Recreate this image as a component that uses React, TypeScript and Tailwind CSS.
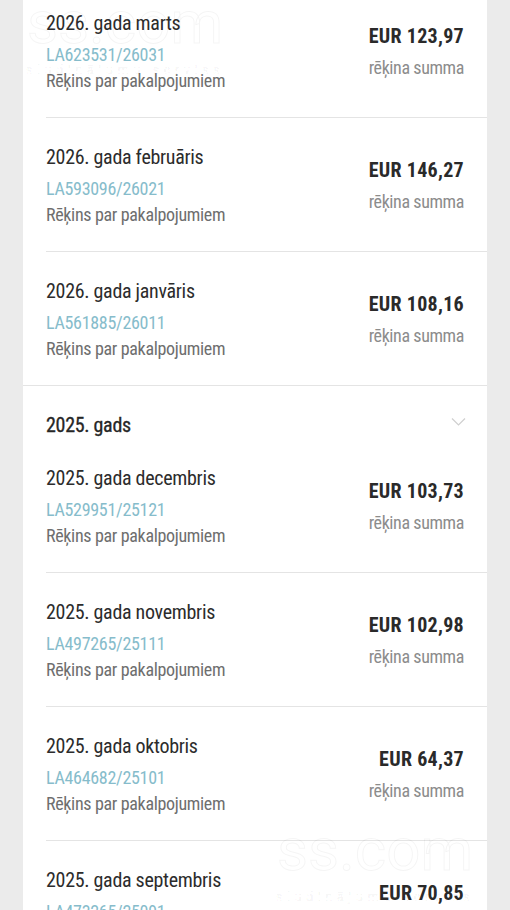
type Invoice = {
  title: string;
  number: string;
  amount: string;
};

const groups: { year: string | null; items: Invoice[] }[] = [
  {
    year: null,
    items: [
      { title: "2026. gada marts", number: "LA623531/26031", amount: "EUR 123,97" },
      { title: "2026. gada februāris", number: "LA593096/26021", amount: "EUR 146,27" },
      { title: "2026. gada janvāris", number: "LA561885/26011", amount: "EUR 108,16" },
    ],
  },
  {
    year: "2025. gads",
    items: [
      { title: "2025. gada decembris", number: "LA529951/25121", amount: "EUR 103,73" },
      { title: "2025. gada novembris", number: "LA497265/25111", amount: "EUR 102,98" },
      { title: "2025. gada oktobris", number: "LA464682/25101", amount: "EUR 64,37" },
      { title: "2025. gada septembris", number: "LA473265/25091", amount: "EUR 70,85" },
    ],
  },
];

// faint "ss.com" watermark that sits over the screenshot
function Watermark({ className }: { className: string }) {
  return (
    <div className={`absolute pointer-events-none select-none w-[210px] ${className}`}>
      <div className="text-[60px] leading-[60px] [font-family:'Roboto',sans-serif] text-transparent [-webkit-text-stroke:1px_rgba(0,0,0,0.045)] text-center">
        ss.com
      </div>
      <div className="mt-[10px] text-[13px] leading-[14px] tracking-[4.4px] [font-family:'Roboto',sans-serif] text-transparent [-webkit-text-stroke:0.6px_rgba(0,0,0,0.05)] text-center whitespace-nowrap">
        sludinājumu serviss
      </div>
    </div>
  );
}

function InvoiceRow({ item, last }: { item: Invoice; last: boolean }) {
  return (
    <li
      className={`ml-[23px] pr-[23px] flex justify-between items-start ${
        last ? "" : "border-b border-[#e4e4e4]"
      }`}
    >
      <div className="pt-[26px] pb-[23px]">
        <div className="text-[20px] leading-[26px] text-[#2c2c2c] tracking-[-0.3px]">{item.title}</div>
        <div className="mt-[6px] text-[18px] leading-[26px] text-[#86bccb] tracking-[-0.3px]">{item.number}</div>
        <div className="text-[18px] leading-[26px] text-[#6e6e6e] tracking-[-0.33px]">Rēķins par pakalpojumiem</div>
      </div>
      <div className="pt-[39px] text-right">
        <div className="text-[20px] leading-[26px] font-bold text-[#2a2a2a] tracking-[0.3px]">{item.amount}</div>
        <div className="mt-[6px] text-[18px] leading-[26px] text-[#8c8c8c] tracking-[-0.4px]">rēķina summa</div>
      </div>
    </li>
  );
}

export default function App() {
  return (
    <div className="relative h-[910px] overflow-hidden bg-[#ebebeb] px-[23px] [font-family:'Roboto_Condensed','Roboto',sans-serif]">
      <div className="-mt-[16px] bg-white min-h-[960px]">
        {groups.map((g, gi) => (
          <section key={gi} className="border-b border-[#e4e4e4]">
            {g.year && (
              <div className="pt-[26px] pb-[1px] pl-[23px] pr-[21px] flex items-center justify-between">
                <h2 className="text-[20px] leading-[26px] text-[#262626] tracking-[-0.3px] [-webkit-text-stroke:0.3px_#262626]">
                  {g.year}
                </h2>
                <svg width="15" height="10" viewBox="0 0 15 10" className="-mt-[6px]">
                  <path d="M1 1.5 L7.5 8 L14 1.5" fill="none" stroke="#cfcfcf" strokeWidth="1.2" />
                </svg>
              </div>
            )}
            <ul>
              {g.items.map((it, i) => (
                <InvoiceRow key={it.number} item={it} last={i === g.items.length - 1} />
              ))}
            </ul>
          </section>
        ))}
      </div>
      <Watermark className="left-[20px] top-[-7px]" />
      <Watermark className="left-[270px] top-[820px]" />
    </div>
  );
}
